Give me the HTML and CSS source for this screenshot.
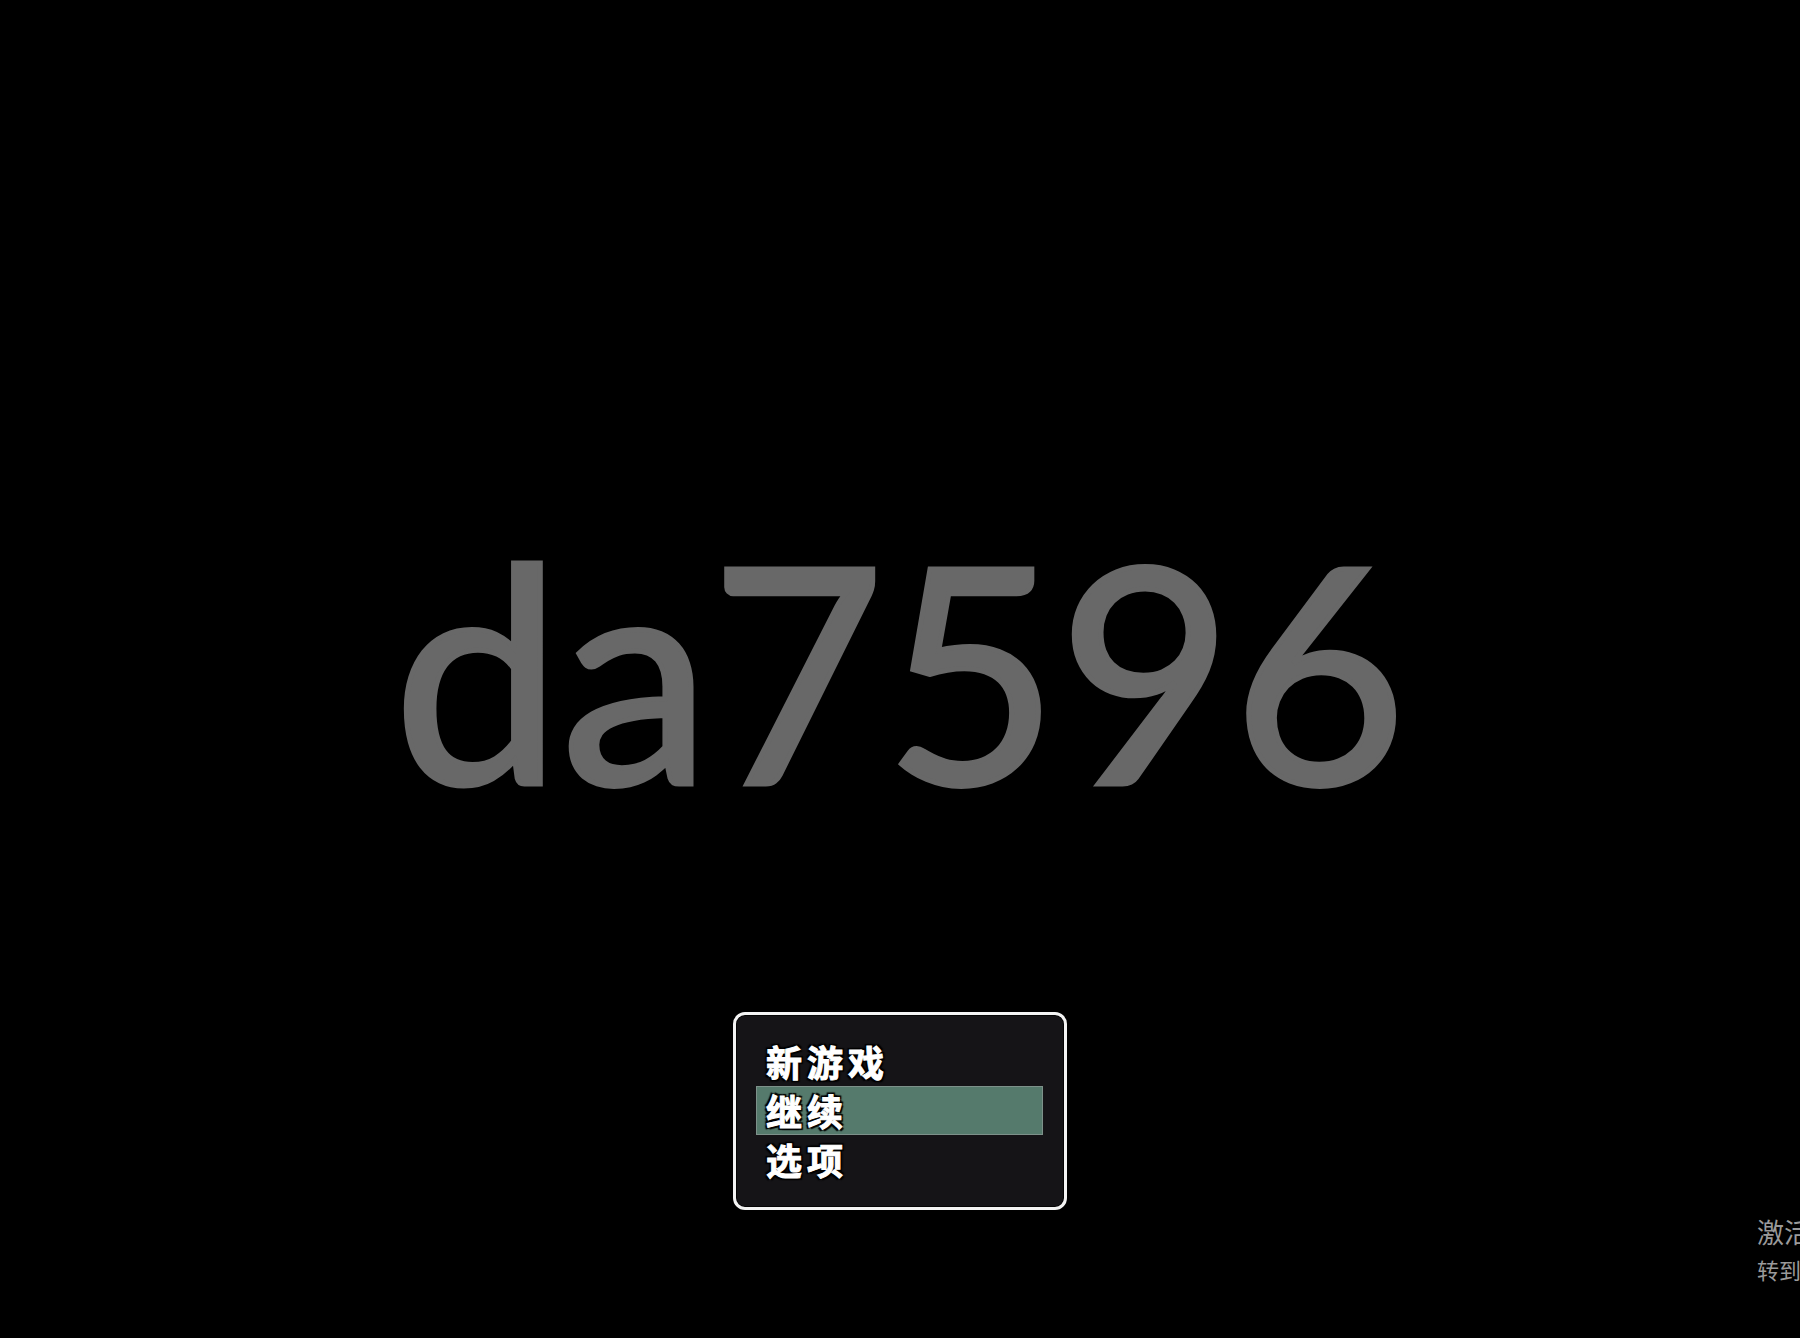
FILE: index.html
```html
<!DOCTYPE html>
<html lang="zh-CN">
<head>
    <meta charset="UTF-8">
    <meta name="viewport" content="width=device-width, initial-scale=1.0">
    <title>da7596</title>
    <link rel="stylesheet" href="styles.css">
</head>
<body>
    <div class="title-screen">
        <h1 class="game-title">da7596</h1>

        <div class="command-window">
            <div class="command">新游戏</div>
            <div class="command selected">继续</div>
            <div class="command">选项</div>
        </div>
    </div>

    <div class="activate-watermark">
        <div class="activate-title">激活 Windows</div>
        <div class="activate-sub">转到“设置”以激活 Windows。</div>
    </div>
</body>
</html>
```

FILE: styles.css
```css
body {
  margin: 0;
  background-color: #000;
  height: 1338px;
  overflow: hidden; /* watermark runs off the right edge */
  position: relative;
  font-family: "Noto Sans CJK SC", sans-serif;
}

.title-screen {
  display: flex;
  flex-direction: column;
  align-items: center;
  padding-top: 518px;
}

.game-title {
  margin: 0;
  font-family: Lato, "Liberation Sans", sans-serif;
  font-size: 300px;
  font-weight: 400;
  line-height: 1;
  color: #686868;
  -webkit-text-stroke: 5px #686868; /* heavier strokes than Lato regular */
}

.command-window {
  margin-top: 194px;
  width: 334px;
  box-sizing: border-box;
  padding: 22px 21px 23px 20px;
  background-color: #151417;
  border: 3px solid #f4f4f4;
  border-radius: 12px;
  box-shadow: inset 0 0 0 1px #050505;
}

.command {
  height: 49px;
  box-sizing: border-box;
  padding-left: 9px;
  font-size: 36px;
  font-weight: 700;
  line-height: 47px;
  letter-spacing: 5px;
  color: #fff;
  -webkit-text-stroke: 1px #fff;
  border: 1px solid transparent;
  text-shadow:
    2px 2px 1px #000,
    -2px -2px 1px #000,
    2px -2px 1px #000,
    -2px 2px 1px #000,
    0 0 3px #000;
}

.command.selected {
  background-color: #557a6c;
  border-color: #7d918a;
}

.activate-watermark {
  position: absolute;
  left: 1757px;
  top: 1211px;
  white-space: nowrap;
  color: #9a9a9a;
}

.activate-title {
  font-size: 27px;
  line-height: 42px;
}

.activate-sub {
  font-size: 22px;
  line-height: 32px;
}
```
